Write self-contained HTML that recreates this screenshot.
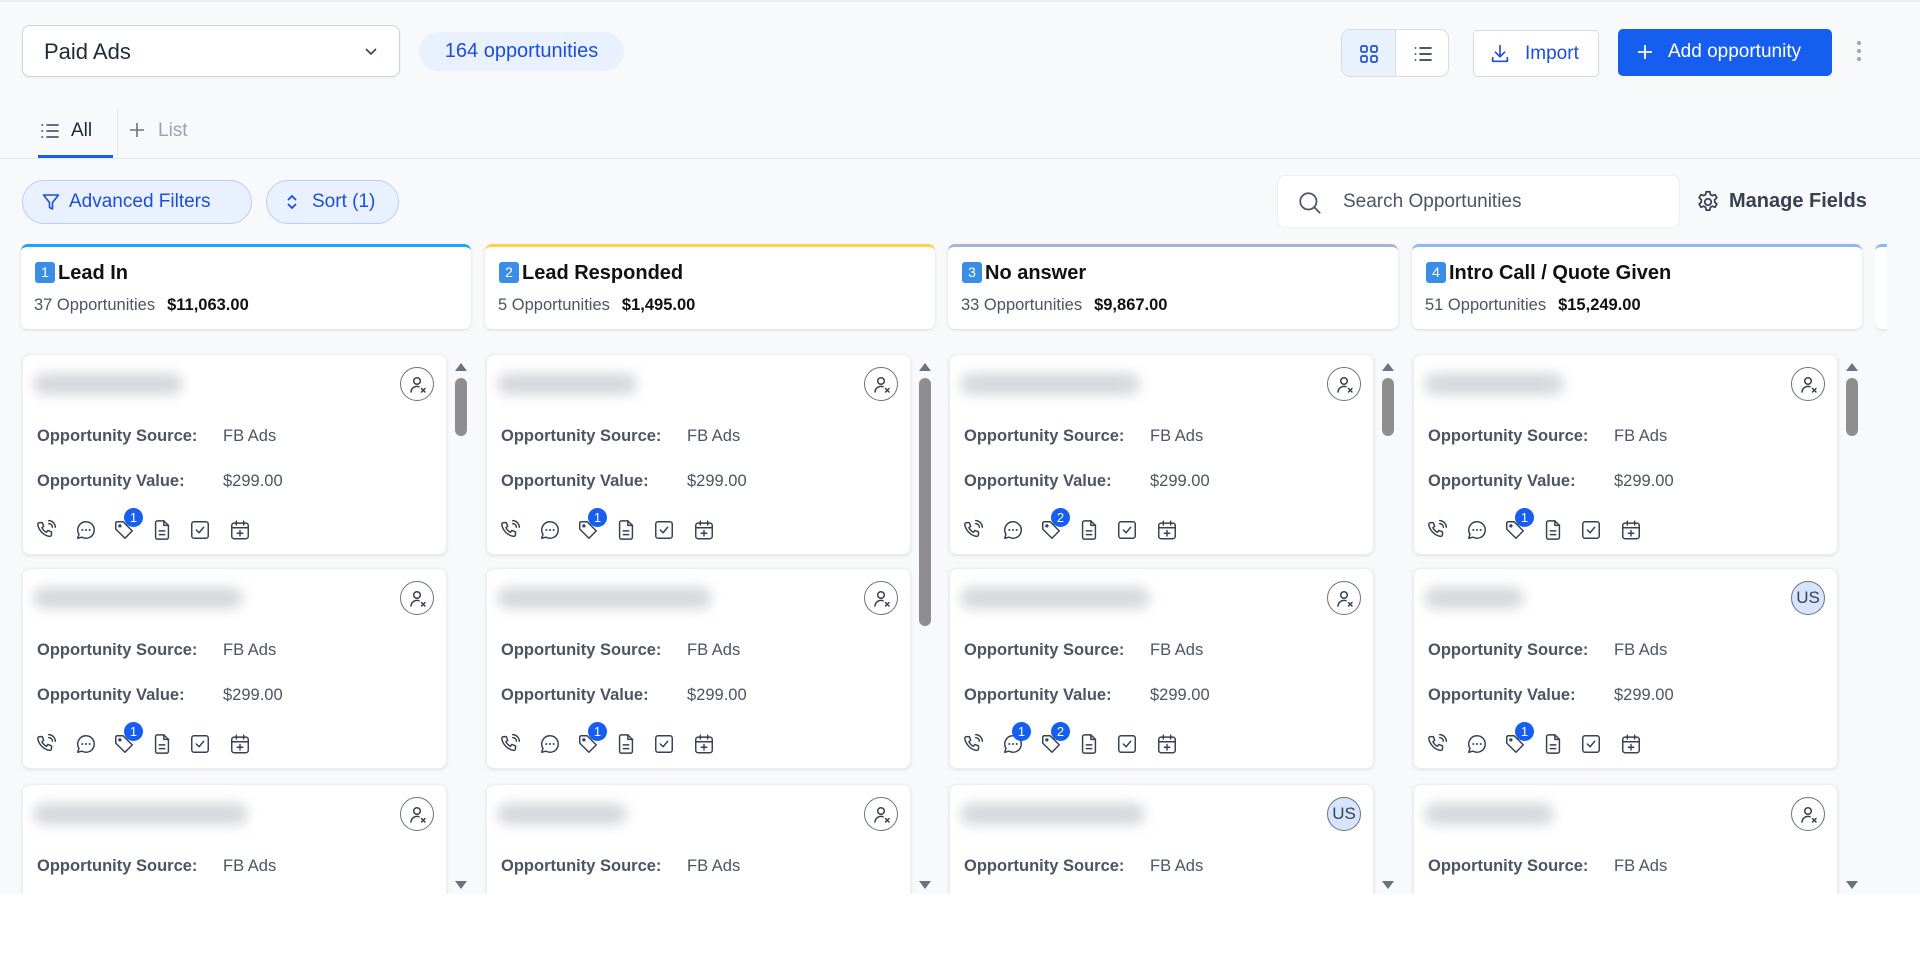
<!DOCTYPE html>
<html><head><meta charset="utf-8">
<style>
*{box-sizing:border-box;margin:0;padding:0}
html,body{width:1920px;height:972px;overflow:hidden;background:#fff;font-family:"Liberation Sans",Arial,sans-serif;color:#111827}
#app{position:absolute;left:0;top:0;width:1920px;height:894px;background:#f8f9fb;overflow:hidden}
.abs{position:absolute}
.dd{left:22px;top:25px;width:378px;height:52px;background:#fff;border:1px solid #cfd3da;border-radius:8px;box-shadow:0 1px 2px rgba(0,0,0,.06)}
.dd span{position:absolute;left:21px;top:13px;font-size:22px;color:#1f2937}
.badge{left:419px;top:32px;width:205px;height:39px;background:#eaf1fe;border-radius:20px;color:#1d4ed8;font-size:20px;line-height:39px;text-align:center}
.tog{left:1341px;top:29px;width:108px;height:48px;border:1px solid #d7dbe2;border-radius:9px;background:#fff;overflow:hidden}
.tog .a{position:absolute;left:0;top:0;width:54px;height:48px;background:#eaf1fe;border-right:1px solid #d7dbe2}
.btn{height:47px;border-radius:5px;font-size:19px;line-height:45px}
.imp{left:1473px;top:30px;width:126px;background:#fff;border:1px solid #d7dbe2;color:#1d4ed8}
.add{left:1618px;top:29px;width:214px;background:#155eef;color:#fff}
.tabs{left:0;top:158px;width:1920px;height:1px;background:#e5e7eb}
.pill{top:180px;height:44px;border:1px solid #b9cdf9;background:#eaf1fe;border-radius:22px;color:#1d4ed8;font-size:19px;line-height:42px}
.search{left:1277px;top:175px;width:403px;height:53px;background:#fff;border:1px solid #eceef2;border-radius:8px}
.col{position:absolute;top:244px;width:450px}
.hd{position:absolute;left:0;top:0;width:450px;height:85px;background:#fff;border-radius:7px;box-shadow:0 1px 3px rgba(0,0,0,.12);border-top:3px solid}
.hd .t{position:absolute;left:14px;top:15px;font-size:20px;font-weight:bold;color:#111}
.hd .n{display:inline-block;width:20px;height:21px;background:#3b8de6;color:#fff;font-size:14px;text-align:center;line-height:21px;border-radius:3px;vertical-align:2px;margin-right:3px;font-weight:normal}
.hd .s{position:absolute;left:13px;top:49px;font-size:16.5px;color:#4b5563}
.hd .s b{color:#111;margin-left:12px}
.card{position:absolute;left:1px;width:425px;height:201px;background:#fff;border-radius:8px;border:1px solid #eceef2;box-shadow:0 1px 3px rgba(0,0,0,.1)}
.blur{position:absolute;left:10px;top:18px;height:22px;background:#d6d8db;border-radius:11px;filter:blur(6px)}
.av{position:absolute;left:377px;top:12px;width:34px;height:34px;border-radius:50%;border:1.5px solid #6b7280;background:#fff}
.av.us{background:#d6e4fd;font-size:17px;color:#374151;text-align:center;line-height:31px}
.av svg{position:absolute;left:7px;top:7px}
.lb{position:absolute;left:14px;font-size:16.5px;font-weight:bold;color:#4b5563}
.vl{position:absolute;left:200px;font-size:16.5px;color:#4b5563}
.ic{position:absolute;top:164px;width:22px;height:22px}
.bd{position:absolute;top:153px;width:19px;height:19px;border-radius:50%;background:#155eef;color:#fff;font-size:13px;text-align:center;line-height:19px}
.sb{position:absolute;left:434px;top:118px;width:12px;height:530px}
</style></head><body>
<svg width="0" height="0" style="position:absolute">
<defs>
<symbol id="ph" viewBox="0 0 24 24"><g fill="none" stroke="#374151" stroke-width="1.6" stroke-linecap="round" stroke-linejoin="round"><path d="M5 4h3l1.5 4-2 1.5a11 11 0 0 0 5 5l1.5-2 4 1.5v3a2 2 0 0 1-2 2A16 16 0 0 1 3 6a2 2 0 0 1 2-2z"/><path d="M15 5a4 4 0 0 1 4 4M15 1.8a7.5 7.5 0 0 1 7.2 7.2"/></g></symbol>
<symbol id="ch" viewBox="0 0 24 24"><g fill="none" stroke="#374151" stroke-width="1.6" stroke-linecap="round" stroke-linejoin="round"><path d="M12 3a9 9 0 1 1-4.5 16.8L3 21l1.3-4.3A9 9 0 0 1 12 3z"/></g><g fill="#374151"><circle cx="8" cy="12" r="1.1"/><circle cx="12" cy="12" r="1.1"/><circle cx="16" cy="12" r="1.1"/></g></symbol>
<symbol id="tg" viewBox="0 0 24 24"><g fill="none" stroke="#374151" stroke-width="1.6" stroke-linejoin="round"><path d="M3 4v7l10 10 8-8L11 3H4z"/><circle cx="7.5" cy="7.5" r="1" fill="#374151"/></g></symbol>
<symbol id="dc" viewBox="0 0 24 24"><g fill="none" stroke="#374151" stroke-width="1.6" stroke-linecap="round" stroke-linejoin="round"><path d="M14 2H7a2 2 0 0 0-2 2v16a2 2 0 0 0 2 2h10a2 2 0 0 0 2-2V7z"/><path d="M14 2v5h5M9 13h6M9 17h6"/></g></symbol>
<symbol id="ck" viewBox="0 0 24 24"><g fill="none" stroke="#374151" stroke-width="1.6" stroke-linecap="round" stroke-linejoin="round"><rect x="3" y="3" width="18" height="18" rx="2.5"/><path d="M8 12l3 3 5-6"/></g></symbol>
<symbol id="cl" viewBox="0 0 24 24"><g fill="none" stroke="#374151" stroke-width="1.6" stroke-linecap="round" stroke-linejoin="round"><rect x="3" y="4.5" width="18" height="17" rx="2.5"/><path d="M3 9.5h18M8 2.5v4M16 2.5v4M12 12.5v6M9 15.5h6"/></g></symbol>
<symbol id="ux" viewBox="0 0 20 20"><g fill="none" stroke="#374151" stroke-width="1.5" stroke-linecap="round"><circle cx="9" cy="6" r="3.3"/><path d="M3 17a6 6 0 0 1 8-5.3M13.5 13.5l3.5 3.5M17 13.5l-3.5 3.5"/></g></symbol>
</defs></svg>
<div id="app">
<div class="abs" style="left:0;top:0;width:1920px;height:2px;background:#eceef2"></div>
<div class="abs dd"><span>Paid Ads</span><svg class="abs" style="left:340px;top:17px" width="16" height="16" viewBox="0 0 16 16"><path d="M3 6l5 5 5-5" fill="none" stroke="#374151" stroke-width="1.6"/></svg></div>
<div class="abs badge">164 opportunities</div>
<div class="abs tog"><div class="a"></div>
<svg class="abs" style="left:17px;top:14px" width="20" height="20" viewBox="0 0 20 20"><g fill="none" stroke="#1d4ed8" stroke-width="1.7"><rect x="2" y="2" width="6" height="6" rx="1.5"/><rect x="12" y="2" width="6" height="6" rx="1.5"/><rect x="2" y="12" width="6" height="6" rx="1.5"/><rect x="12" y="12" width="6" height="6" rx="1.5"/></g></svg>
<svg class="abs" style="left:71px;top:14px" width="20" height="20" viewBox="0 0 20 20"><g stroke="#374151" stroke-width="1.7" stroke-linecap="round"><path d="M7 4h11M7 10h11M7 16h11M2.5 4h.1M2.5 10h.1M2.5 16h.1"/></g></svg></div>
<div class="abs btn imp"><svg class="abs" style="left:15px;top:12px" width="22" height="22" viewBox="0 0 24 24"><g fill="none" stroke="#1d4ed8" stroke-width="1.8" stroke-linecap="round" stroke-linejoin="round"><path d="M12 3v12M7 10l5 5 5-5M4 16v4h16v-4"/></g></svg><span style="position:absolute;left:51px">Import</span></div>
<div class="abs btn add"><svg class="abs" style="left:18px;top:14px" width="18" height="18" viewBox="0 0 18 18"><path d="M9 2v14M2 9h14" stroke="#fff" stroke-width="1.8"/></svg><span style="position:absolute;left:50px">Add opportunity</span></div>
<div class="abs" style="left:1857px;top:41px;width:5px">
<div style="width:4px;height:4px;border-radius:2px;background:#9ca3af;margin-bottom:4px"></div><div style="width:4px;height:4px;border-radius:2px;background:#9ca3af;margin-bottom:4px"></div><div style="width:4px;height:4px;border-radius:2px;background:#9ca3af"></div></div>

<svg class="abs" style="left:40px;top:122px" width="20" height="18" viewBox="0 0 20 18"><g stroke="#374151" stroke-width="1.6" stroke-linecap="round"><path d="M7 3h11M7 9h11M7 15h11M2 3h.5M2 9h.5M2 15h.5"/></g></svg>
<div class="abs" style="left:71px;top:120px;font-size:19px;color:#1f2937">All</div>
<div class="abs" style="left:38px;top:155px;width:75px;height:4px;background:#155eef"></div>
<div class="abs" style="left:117px;top:108px;width:1px;height:48px;background:#e5e7eb"></div>
<svg class="abs" style="left:128px;top:121px" width="18" height="18" viewBox="0 0 18 18"><path d="M9 2v14M2 9h14" stroke="#6b7280" stroke-width="1.6"/></svg>
<div class="abs" style="left:158px;top:120px;font-size:19px;color:#9ca3af">List</div>
<div class="abs tabs"></div>

<div class="abs pill" style="left:22px;width:230px"><svg class="abs" style="left:18px;top:11px" width="20" height="20" viewBox="0 0 20 20"><path d="M2.5 3h15l-6 7.5V17l-3-1.5v-5z" fill="none" stroke="#1d4ed8" stroke-width="1.6" stroke-linejoin="round"/></svg><span style="position:absolute;left:46px">Advanced Filters</span></div>
<div class="abs pill" style="left:266px;width:133px"><svg class="abs" style="left:18px;top:12px" width="14" height="18" viewBox="0 0 14 18"><path d="M3 7l4-4 4 4M3 11l4 4 4-4" fill="none" stroke="#1d4ed8" stroke-width="1.8"/></svg><span style="position:absolute;left:45px">Sort (1)</span></div>
<div class="abs search"><svg class="abs" style="left:19px;top:14px" width="26" height="26" viewBox="0 0 24 24"><g fill="none" stroke="#4b5563" stroke-width="1.6" stroke-linecap="round"><circle cx="10.5" cy="10.5" r="7.5"/><path d="M16 16l5 5"/></g></svg><span style="position:absolute;left:65px;top:15px;font-size:19px;color:#4b5563">Search Opportunities</span></div>
<svg class="abs" style="left:1695px;top:189px" width="26" height="26" viewBox="0 0 24 24"><g fill="none" stroke="#374151" stroke-width="1.6"><circle cx="12" cy="12" r="3"/><path d="M10.3 2.5h3.4l.5 2.6 1.8 1 2.5-.9 1.7 2.9-2 1.7v2.4l2 1.7-1.7 2.9-2.5-.9-1.8 1-.5 2.6h-3.4l-.5-2.6-1.8-1-2.5.9-1.7-2.9 2-1.7v-2.4l-2-1.7 1.7-2.9 2.5.9 1.8-1z" stroke-linejoin="round"/></g></svg>
<div class="abs" style="left:1729px;top:190px;font-size:20px;font-weight:bold;color:#374151">Manage Fields</div>

<div class="col" style="left:21px;height:650px">
<div class="hd" style="border-top-color:#1ea5f5"><div class="t"><span class="n">1</span>Lead In</div><div class="s">37 Opportunities<b>$11,063.00</b></div></div>
<div class="card" style="top:110px"><div class="blur" style="width:150px"></div><div class="av"><svg width="20" height="20"><use href="#ux"/></svg></div><div class="lb" style="top:72px">Opportunity Source:</div><div class="vl" style="top:72px">FB Ads</div><div class="lb" style="top:117px">Opportunity Value:</div><div class="vl" style="top:117px">$299.00</div>
<svg class="ic" style="left:12px"><use href="#ph"/></svg><svg class="ic" style="left:52px"><use href="#ch"/></svg><svg class="ic" style="left:90px"><use href="#tg"/></svg><svg class="ic" style="left:128px"><use href="#dc"/></svg><svg class="ic" style="left:166px"><use href="#ck"/></svg><svg class="ic" style="left:206px"><use href="#cl"/></svg><div class="bd" style="left:101px">1</div></div>
<div class="card" style="top:324px"><div class="blur" style="width:210px"></div><div class="av"><svg width="20" height="20"><use href="#ux"/></svg></div><div class="lb" style="top:72px">Opportunity Source:</div><div class="vl" style="top:72px">FB Ads</div><div class="lb" style="top:117px">Opportunity Value:</div><div class="vl" style="top:117px">$299.00</div>
<svg class="ic" style="left:12px"><use href="#ph"/></svg><svg class="ic" style="left:52px"><use href="#ch"/></svg><svg class="ic" style="left:90px"><use href="#tg"/></svg><svg class="ic" style="left:128px"><use href="#dc"/></svg><svg class="ic" style="left:166px"><use href="#ck"/></svg><svg class="ic" style="left:206px"><use href="#cl"/></svg><div class="bd" style="left:101px">1</div></div>
<div class="card" style="top:540px"><div class="blur" style="width:215px"></div><div class="av"><svg width="20" height="20"><use href="#ux"/></svg></div><div class="lb" style="top:72px">Opportunity Source:</div><div class="vl" style="top:72px">FB Ads</div></div>
<div class="sb"><svg class="abs" style="top:0" width="12" height="10"><path d="M0 9L6 1l6 8z" fill="#6b7280"/></svg><div class="abs" style="top:16px;left:0;width:12px;height:58px;border-radius:6px;background:#8e8e8e"></div><svg class="abs" style="top:518px" width="12" height="10"><path d="M0 1l6 8 6-8z" fill="#6b7280"/></svg></div>
</div>

<div class="col" style="left:485px;height:650px">
<div class="hd" style="border-top-color:#fcd34d"><div class="t"><span class="n">2</span>Lead Responded</div><div class="s">5 Opportunities<b>$1,495.00</b></div></div>
<div class="card" style="top:110px"><div class="blur" style="width:140px"></div><div class="av"><svg width="20" height="20"><use href="#ux"/></svg></div><div class="lb" style="top:72px">Opportunity Source:</div><div class="vl" style="top:72px">FB Ads</div><div class="lb" style="top:117px">Opportunity Value:</div><div class="vl" style="top:117px">$299.00</div>
<svg class="ic" style="left:12px"><use href="#ph"/></svg><svg class="ic" style="left:52px"><use href="#ch"/></svg><svg class="ic" style="left:90px"><use href="#tg"/></svg><svg class="ic" style="left:128px"><use href="#dc"/></svg><svg class="ic" style="left:166px"><use href="#ck"/></svg><svg class="ic" style="left:206px"><use href="#cl"/></svg><div class="bd" style="left:101px">1</div></div>
<div class="card" style="top:324px"><div class="blur" style="width:215px"></div><div class="av"><svg width="20" height="20"><use href="#ux"/></svg></div><div class="lb" style="top:72px">Opportunity Source:</div><div class="vl" style="top:72px">FB Ads</div><div class="lb" style="top:117px">Opportunity Value:</div><div class="vl" style="top:117px">$299.00</div>
<svg class="ic" style="left:12px"><use href="#ph"/></svg><svg class="ic" style="left:52px"><use href="#ch"/></svg><svg class="ic" style="left:90px"><use href="#tg"/></svg><svg class="ic" style="left:128px"><use href="#dc"/></svg><svg class="ic" style="left:166px"><use href="#ck"/></svg><svg class="ic" style="left:206px"><use href="#cl"/></svg><div class="bd" style="left:101px">1</div></div>
<div class="card" style="top:540px"><div class="blur" style="width:130px"></div><div class="av"><svg width="20" height="20"><use href="#ux"/></svg></div><div class="lb" style="top:72px">Opportunity Source:</div><div class="vl" style="top:72px">FB Ads</div></div>
<div class="sb"><svg class="abs" style="top:0" width="12" height="10"><path d="M0 9L6 1l6 8z" fill="#6b7280"/></svg><div class="abs" style="top:16px;left:0;width:12px;height:248px;border-radius:6px;background:#8e8e8e"></div><svg class="abs" style="top:518px" width="12" height="10"><path d="M0 1l6 8 6-8z" fill="#6b7280"/></svg></div>
</div>

<div class="col" style="left:948px;height:650px">
<div class="hd" style="border-top-color:#a8b4d0"><div class="t"><span class="n">3</span>No answer</div><div class="s">33 Opportunities<b>$9,867.00</b></div></div>
<div class="card" style="top:110px"><div class="blur" style="width:180px"></div><div class="av"><svg width="20" height="20"><use href="#ux"/></svg></div><div class="lb" style="top:72px">Opportunity Source:</div><div class="vl" style="top:72px">FB Ads</div><div class="lb" style="top:117px">Opportunity Value:</div><div class="vl" style="top:117px">$299.00</div>
<svg class="ic" style="left:12px"><use href="#ph"/></svg><svg class="ic" style="left:52px"><use href="#ch"/></svg><svg class="ic" style="left:90px"><use href="#tg"/></svg><svg class="ic" style="left:128px"><use href="#dc"/></svg><svg class="ic" style="left:166px"><use href="#ck"/></svg><svg class="ic" style="left:206px"><use href="#cl"/></svg><div class="bd" style="left:101px">2</div></div>
<div class="card" style="top:324px"><div class="blur" style="width:190px"></div><div class="av"><svg width="20" height="20"><use href="#ux"/></svg></div><div class="lb" style="top:72px">Opportunity Source:</div><div class="vl" style="top:72px">FB Ads</div><div class="lb" style="top:117px">Opportunity Value:</div><div class="vl" style="top:117px">$299.00</div>
<svg class="ic" style="left:12px"><use href="#ph"/></svg><svg class="ic" style="left:52px"><use href="#ch"/></svg><svg class="ic" style="left:90px"><use href="#tg"/></svg><svg class="ic" style="left:128px"><use href="#dc"/></svg><svg class="ic" style="left:166px"><use href="#ck"/></svg><svg class="ic" style="left:206px"><use href="#cl"/></svg><div class="bd" style="left:62px">1</div><div class="bd" style="left:101px">2</div></div>
<div class="card" style="top:540px"><div class="blur" style="width:185px"></div><div class="av us">US</div><div class="lb" style="top:72px">Opportunity Source:</div><div class="vl" style="top:72px">FB Ads</div></div>
<div class="sb"><svg class="abs" style="top:0" width="12" height="10"><path d="M0 9L6 1l6 8z" fill="#6b7280"/></svg><div class="abs" style="top:16px;left:0;width:12px;height:58px;border-radius:6px;background:#8e8e8e"></div><svg class="abs" style="top:518px" width="12" height="10"><path d="M0 1l6 8 6-8z" fill="#6b7280"/></svg></div>
</div>

<div class="col" style="left:1412px;height:650px">
<div class="hd" style="border-top-color:#93b4f5"><div class="t"><span class="n">4</span>Intro Call / Quote Given</div><div class="s">51 Opportunities<b>$15,249.00</b></div></div>
<div class="card" style="top:110px"><div class="blur" style="width:140px"></div><div class="av"><svg width="20" height="20"><use href="#ux"/></svg></div><div class="lb" style="top:72px">Opportunity Source:</div><div class="vl" style="top:72px">FB Ads</div><div class="lb" style="top:117px">Opportunity Value:</div><div class="vl" style="top:117px">$299.00</div>
<svg class="ic" style="left:12px"><use href="#ph"/></svg><svg class="ic" style="left:52px"><use href="#ch"/></svg><svg class="ic" style="left:90px"><use href="#tg"/></svg><svg class="ic" style="left:128px"><use href="#dc"/></svg><svg class="ic" style="left:166px"><use href="#ck"/></svg><svg class="ic" style="left:206px"><use href="#cl"/></svg><div class="bd" style="left:101px">1</div></div>
<div class="card" style="top:324px"><div class="blur" style="width:100px"></div><div class="av us">US</div><div class="lb" style="top:72px">Opportunity Source:</div><div class="vl" style="top:72px">FB Ads</div><div class="lb" style="top:117px">Opportunity Value:</div><div class="vl" style="top:117px">$299.00</div>
<svg class="ic" style="left:12px"><use href="#ph"/></svg><svg class="ic" style="left:52px"><use href="#ch"/></svg><svg class="ic" style="left:90px"><use href="#tg"/></svg><svg class="ic" style="left:128px"><use href="#dc"/></svg><svg class="ic" style="left:166px"><use href="#ck"/></svg><svg class="ic" style="left:206px"><use href="#cl"/></svg><div class="bd" style="left:101px">1</div></div>
<div class="card" style="top:540px"><div class="blur" style="width:130px"></div><div class="av"><svg width="20" height="20"><use href="#ux"/></svg></div><div class="lb" style="top:72px">Opportunity Source:</div><div class="vl" style="top:72px">FB Ads</div></div>
<div class="sb"><svg class="abs" style="top:0" width="12" height="10"><path d="M0 9L6 1l6 8z" fill="#6b7280"/></svg><div class="abs" style="top:16px;left:0;width:12px;height:58px;border-radius:6px;background:#8e8e8e"></div><svg class="abs" style="top:518px" width="12" height="10"><path d="M0 1l6 8 6-8z" fill="#6b7280"/></svg></div>
</div>

<div class="col" style="left:1875px;width:12px;overflow:hidden;height:90px"><div class="hd" style="border-top-color:#93b4f5"></div></div>
</div>
</body></html>
